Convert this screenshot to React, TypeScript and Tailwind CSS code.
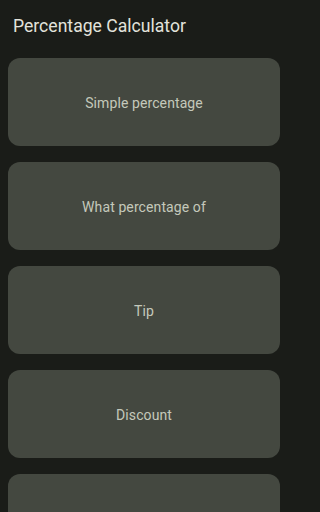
const items = ["Simple percentage", "What percentage of", "Tip", "Discount", ""];

export default function App() {
  return (
    <div className="min-h-screen w-full bg-[#1a1c18]">
      <div
        className="w-[288px] h-[512px] overflow-hidden bg-[#1a1c18]"
        style={{ fontFamily: "Roboto, 'Noto Sans', sans-serif" }}
      >
        <header className="h-[52px] flex items-center px-[13px]">
          <h1 className="text-[17.6px] leading-6 text-[#e3e3dc] mt-[-1px]">Percentage Calculator</h1>
        </header>
        <div className="flex flex-col gap-4 px-2 pt-[6px]">
          {items.map((label, i) => (
            <button
              key={i}
              className="h-[88px] w-full shrink-0 rounded-xl bg-[#444840] flex items-center justify-center text-[14px] tracking-[0.1px] leading-5 pt-px text-[#c4c8bb]"
            >
              {label}
            </button>
          ))}
        </div>
      </div>
    </div>
  );
}
